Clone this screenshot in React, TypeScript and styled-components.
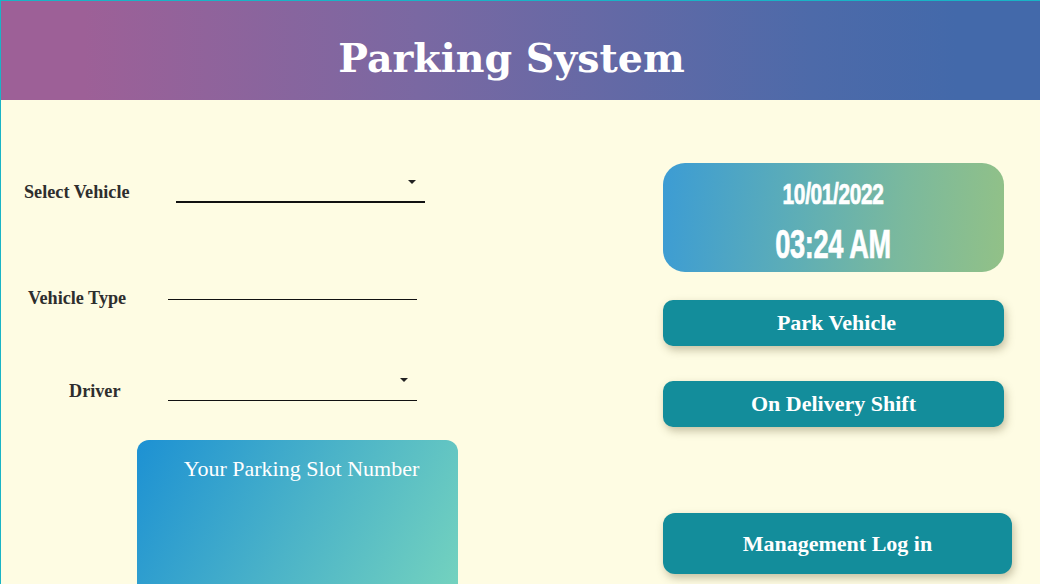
import React from "react";
import styled, { createGlobalStyle } from "styled-components";

const GlobalStyle = createGlobalStyle`
  html, body {
    margin: 0;
    padding: 0;
    background: #fefce3;
    overflow: hidden;
  }
  * { box-sizing: border-box; }
`;

const Page = styled.div`
  width: 1040px;
  height: 584px;
  overflow: hidden;
  background: #fefce3;
  border-top: 1px solid #19b4c6;
  border-left: 1px solid #19b4c6;
  font-family: "Liberation Serif", "Times New Roman", serif;
`;

const Header = styled.header`
  height: 99px;
  background: linear-gradient(90deg, #9d6097 8%, #7a68a2 40%, #4d6aa9 78%, #4369aa 92%);
  display: flex;
  justify-content: center;
  align-items: flex-start;
  padding-top: 38px;
  padding-right: 18px;
`;

const Title = styled.h1`
  margin: 0;
  font-family: "DejaVu Serif", "Liberation Serif", serif;
  font-weight: 700;
  font-size: 39.5px;
  line-height: 1;
  color: #ffffff;
`;

const Content = styled.main`
  display: grid;
  grid-template-columns: 662px 349px;
  align-items: start;
`;

const LeftCol = styled.section`
  display: flex;
  flex-direction: column;
`;

const FormRow = styled.div<{ $mt: number; $labelCol: number; $h: number }>`
  display: grid;
  grid-template-columns: ${(p) => p.$labelCol}px 249px;
  grid-template-rows: ${(p) => p.$h}px;
  margin-top: ${(p) => p.$mt}px;
  align-items: start;
`;

const Label = styled.label<{ $left: number; $top: number }>`
  padding-left: ${(p) => p.$left}px;
  margin-top: ${(p) => p.$top}px;
  font-family: "Liberation Serif", "Times New Roman", serif;
  font-weight: 700;
  font-size: 18.2px;
  color: #2e2e2e;
  white-space: nowrap;
`;

const Field = styled.div<{ $h: number; $line: number }>`
  position: relative;
  height: ${(p) => p.$h + p.$line}px;
  border-bottom: ${(p) => p.$line}px solid #111;
`;

const Caret = styled.span<{ $top: number; $right: number }>`
  position: absolute;
  top: ${(p) => p.$top}px;
  right: ${(p) => p.$right}px;
  width: 0;
  height: 0;
  border-left: 4px solid transparent;
  border-right: 4px solid transparent;
  border-top: 4px solid #222;
`;

const SlotCard = styled.div`
  margin-top: 39px;
  margin-left: 136px;
  width: 321px;
  height: 170px;
  border-radius: 12px;
  background: linear-gradient(118deg, #1d91d3 0%, #4bb3c8 50%, #76d4be 100%);
  padding-top: 16px;
  padding-left: 8px;
  text-align: center;
  color: #ffffff;
  font-family: "Liberation Serif", "Times New Roman", serif;
  font-size: 22px;
`;

const RightCol = styled.section`
  display: flex;
  flex-direction: column;
  align-items: flex-start;
`;

const Clock = styled.div`
  margin-top: 63px;
  width: 341px;
  height: 109px;
  border-radius: 22px;
  background: linear-gradient(95deg, #3c9cd4 0%, #5eaeb6 40%, #7bb99d 70%, #92c187 100%);
  display: flex;
  flex-direction: column;
  align-items: center;
  padding-top: 17px;
  color: #ffffff;
  font-family: "Liberation Sans", Arial, sans-serif;
  font-weight: 700;
`;

const ClockLine = styled.div<{ $size: number; $scale: number; $mt: number }>`
  display: inline-block;
  margin-top: ${(p) => p.$mt}px;
  font-size: ${(p) => p.$size}px;
  line-height: ${(p) => p.$size}px;
  transform: scaleX(${(p) => p.$scale});
  white-space: nowrap;
  letter-spacing: -0.5px;
  -webkit-text-stroke: 0.7px #ffffff;
`;

const ActionButton = styled.button<{ $mt: number; $w: number; $h: number; $r: number; $shift?: number }>`
  margin-top: ${(p) => p.$mt}px;
  width: ${(p) => p.$w}px;
  height: ${(p) => p.$h}px;
  border: none;
  border-radius: ${(p) => p.$r}px;
  background: #138d9b;
  color: #ffffff;
  font-family: "Liberation Serif", "Times New Roman", serif;
  font-weight: 700;
  font-size: 22px;
  padding: 0 0 0 ${(p) => p.$shift ?? 0}px;
  box-shadow: 2px 4px 8px rgba(90, 80, 40, 0.35);
  cursor: pointer;
`;

export default function App() {
  return (
    <>
      <GlobalStyle />
      <Page>
        <Header>
          <Title>Parking System</Title>
        </Header>
        <Content>
          <LeftCol>
            <FormRow $mt={70} $labelCol={175} $h={33}>
              <Label $left={23} $top={12}>Select Vehicle</Label>
              <Field $h={31} $line={2}>
                <Caret $top={10} $right={9} />
              </Field>
            </FormRow>
            <FormRow $mt={67} $labelCol={167} $h={30}>
              <Label $left={27} $top={18}>Vehicle Type</Label>
              <Field $h={29} $line={1} />
            </FormRow>
            <FormRow $mt={70} $labelCol={167} $h={31}>
              <Label $left={68} $top={11}>Driver</Label>
              <Field $h={30} $line={1}>
                <Caret $top={8} $right={9} />
              </Field>
            </FormRow>
            <SlotCard>Your Parking Slot Number</SlotCard>
          </LeftCol>
          <RightCol>
            <Clock>
              <ClockLine $size={29} $scale={0.72} $mt={0}>10/01/2022</ClockLine>
              <ClockLine $size={40} $scale={0.68} $mt={15}>03:24 AM</ClockLine>
            </Clock>
            <ActionButton $mt={28} $w={341} $h={46} $r={10} $shift={6}>Park Vehicle</ActionButton>
            <ActionButton $mt={35} $w={341} $h={46} $r={10}>On Delivery Shift</ActionButton>
            <ActionButton $mt={86} $w={349} $h={61} $r={12}>Management Log in</ActionButton>
          </RightCol>
        </Content>
      </Page>
    </>
  );
}
